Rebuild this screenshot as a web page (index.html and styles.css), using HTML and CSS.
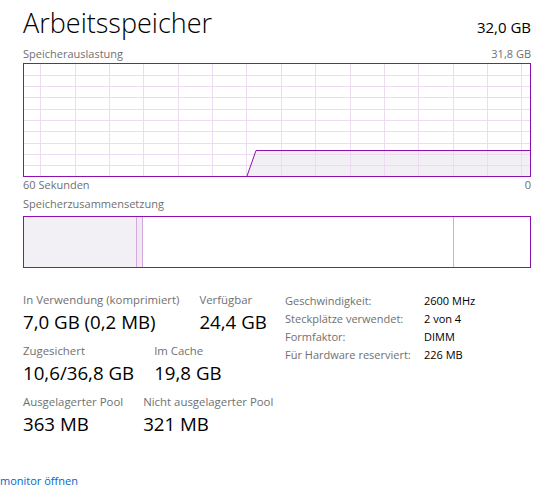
FILE: index.html
```html
<!DOCTYPE html>
<html lang="de">
<head>
<meta charset="utf-8">
<title>Arbeitsspeicher</title>
<link rel="stylesheet" href="styles.css">
</head>
<body>
<div class="page">
  <div class="head">
    <h1 class="title">Arbeitsspeicher</h1>
    <span class="total">32,0 GB</span>
  </div>
  <div class="caprow top">
    <span>Speicherauslastung</span>
    <span>31,8 GB</span>
  </div>
  <div class="graph">
    <svg width="506" height="112" viewBox="0 0 506 112" shape-rendering="crispEdges">
      <polygon points="223,112 232,86 506,86 506,112" fill="#f2f0f4" stroke="none"/>
      <g stroke="#ecdcf1" stroke-width="1">
        <line x1="16.5" y1="0" x2="16.5" y2="112"/>
        <line x1="51.5" y1="0" x2="51.5" y2="112"/>
        <line x1="85.5" y1="0" x2="85.5" y2="112"/>
        <line x1="119.5" y1="0" x2="119.5" y2="112"/>
        <line x1="154.5" y1="0" x2="154.5" y2="112"/>
        <line x1="188.5" y1="0" x2="188.5" y2="112"/>
        <line x1="222.5" y1="0" x2="222.5" y2="112"/>
        <line x1="257.5" y1="0" x2="257.5" y2="112"/>
        <line x1="291.5" y1="0" x2="291.5" y2="112"/>
        <line x1="326.5" y1="0" x2="326.5" y2="112"/>
        <line x1="360.5" y1="0" x2="360.5" y2="112"/>
        <line x1="394.5" y1="0" x2="394.5" y2="112"/>
        <line x1="429.5" y1="0" x2="429.5" y2="112"/>
        <line x1="463.5" y1="0" x2="463.5" y2="112"/>
        <line x1="497.5" y1="0" x2="497.5" y2="112"/>
        <line x1="0" y1="11.5" x2="506" y2="11.5"/>
        <line x1="0" y1="22.5" x2="506" y2="22.5"/>
        <line x1="0" y1="33.5" x2="506" y2="33.5"/>
        <line x1="0" y1="45.5" x2="506" y2="45.5"/>
        <line x1="0" y1="56.5" x2="506" y2="56.5"/>
        <line x1="0" y1="67.5" x2="506" y2="67.5"/>
        <line x1="0" y1="79.5" x2="506" y2="79.5"/>
        <line x1="0" y1="90.5" x2="506" y2="90.5"/>
        <line x1="0" y1="101.5" x2="506" y2="101.5"/>
      </g>
      <polyline points="223,112 232,86.5 506,86.5" fill="none" stroke="#8b12ae" stroke-width="1" shape-rendering="auto"/>
    </svg>
  </div>
  <div class="caprow bottom">
    <span>60 Sekunden</span>
    <span>0</span>
  </div>
  <div class="caption">Speicherzusammensetzung</div>
  <div class="comp">
    <div class="seg inuse"></div>
    <div class="seg modified"></div>
    <div class="seg standby"></div>
    <div class="seg free"></div>
  </div>
  <div class="stats">
    <div class="dyn">
      <div class="row">
        <div class="item"><div class="lbl">In Verwendung (komprimiert)</div><div class="val">7,0 GB (0,2 MB)</div></div>
        <div class="item"><div class="lbl">Verfügbar</div><div class="val">24,4 GB</div></div>
      </div>
      <div class="row">
        <div class="item"><div class="lbl">Zugesichert</div><div class="val">10,6/36,8 GB</div></div>
        <div class="item"><div class="lbl">Im Cache</div><div class="val">19,8 GB</div></div>
      </div>
      <div class="row">
        <div class="item"><div class="lbl">Ausgelagerter Pool</div><div class="val">363 MB</div></div>
        <div class="item"><div class="lbl">Nicht ausgelagerter Pool</div><div class="val">321 MB</div></div>
      </div>
    </div>
    <dl class="static">
      <dt>Geschwindigkeit:</dt><dd>2600 MHz</dd>
      <dt>Steckplätze verwendet:</dt><dd>2 von 4</dd>
      <dt>Formfaktor:</dt><dd>DIMM</dd>
      <dt>Für Hardware reserviert:</dt><dd>226 MB</dd>
    </dl>
  </div>
</div>
<a class="link" href="#">monitor öffnen</a>
</body>
</html>
```

FILE: styles.css
```css
html, body {
  margin: 0;
  padding: 0;
  background: #ffffff;
}
body {
  width: 555px;
  height: 501px;
  overflow: hidden;
  font-family: "Open Sans", "Noto Sans", sans-serif;
  color: #000;
}
.page {
  padding-left: 23px;
  width: 508px;
}
.head {
  display: flex;
  justify-content: space-between;
  align-items: baseline;
  height: 46px;
}
.title {
  margin: 0;
  font-weight: 300;
  font-size: 27px;
  line-height: 46px;
}
.total {
  font-size: 15px;
}
.caprow {
  display: flex;
  justify-content: space-between;
  font-size: 11px;
  color: #707070;
  line-height: 16px;
}
.caprow.top {
  height: 17px;
}
.caprow.bottom {
  height: 19px;
}
.caption {
  font-size: 11px;
  color: #707070;
  line-height: 16px;
  height: 20px;
}
.graph {
  width: 508px;
  height: 114px;
  box-sizing: border-box;
  border: 1px solid #8b12ae;
}
.graph svg {
  display: block;
}
.comp {
  width: 508px;
  height: 52px;
  box-sizing: border-box;
  border: 1px solid #8b12ae;
  display: flex;
}
.seg {
  height: 100%;
  box-sizing: border-box;
}
.inuse {
  width: 112px;
  background: #f2f0f4;
}
.modified {
  width: 7px;
  background: #f1e8f4;
  border-left: 1px solid #d1a9dd;
  border-right: 1px solid #d1a9dd;
}
.standby {
  width: 311px;
  border-right: 1px solid #c7b3cf;
}
.free {
  flex: 1;
}
.stats {
  display: flex;
  margin-top: 24px;
}
.dyn {
  width: 262px;
}
.row {
  display: flex;
  gap: 20px;
  height: 51px;
}
.lbl {
  font-size: 11.4px;
  color: #707070;
  line-height: 16px;
}
.val {
  font-size: 18.7px;
  line-height: 26px;
  margin-top: 1px;
}
.static {
  margin: 0;
  display: grid;
  grid-template-columns: 139px auto;
  grid-auto-rows: 18px;
  font-size: 11px;
  line-height: 16px;
  align-content: start;
  padding-top: 1px;
}
.static dt {
  color: #707070;
}
.static dd {
  margin: 0;
  color: #000;
}
.link {
  display: block;
  margin-top: 28px;
  font-size: 11px;
  color: #0066cc;
  text-decoration: none;
  line-height: 16px;
}
```
